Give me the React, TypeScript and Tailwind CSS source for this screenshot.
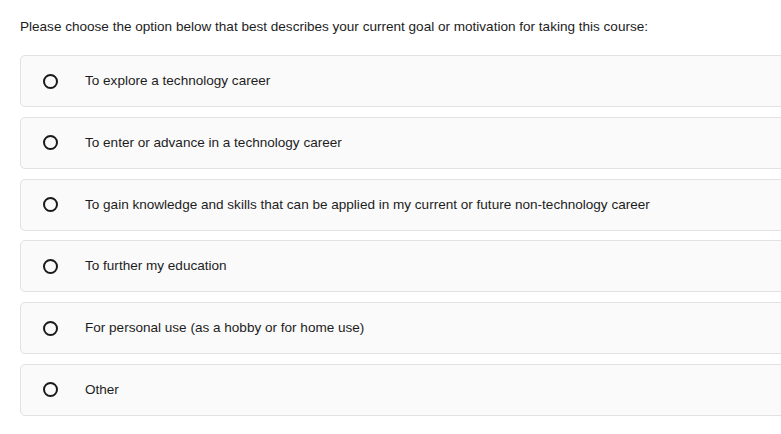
import React from "react";

const options = [
  "To explore a technology career",
  "To enter or advance in a technology career",
  "To gain knowledge and skills that can be applied in my current or future non-technology career",
  "To further my education",
  "For personal use (as a hobby or for home use)",
  "Other",
];

export default function App() {
  return (
    <div
      className="w-[781px] h-[434px] overflow-hidden bg-white pl-[20px] pt-[19px] text-[#1d1d1d]"
      style={{ fontFamily: '"Liberation Sans", Arial, sans-serif' }}
    >
      <p className="text-[13.55px] leading-[16px] m-0">
        Please choose the option below that best describes your current goal or motivation for taking this course:
      </p>
      <div className="mt-[20px] flex flex-col gap-[9.8px] w-[800px]">
        {options.map((o) => (
          <label
            key={o}
            className="flex items-center h-[52px] rounded-[5px] border border-[#e1e1e6] bg-[#fafafa] pl-[22px]"
          >
            <span className="w-[15px] h-[15px] rounded-full border-2 border-[#1a1a1a] shrink-0" />
            <span className="ml-[27px] text-[13.55px] leading-[16px]">{o}</span>
          </label>
        ))}
      </div>
    </div>
  );
}
